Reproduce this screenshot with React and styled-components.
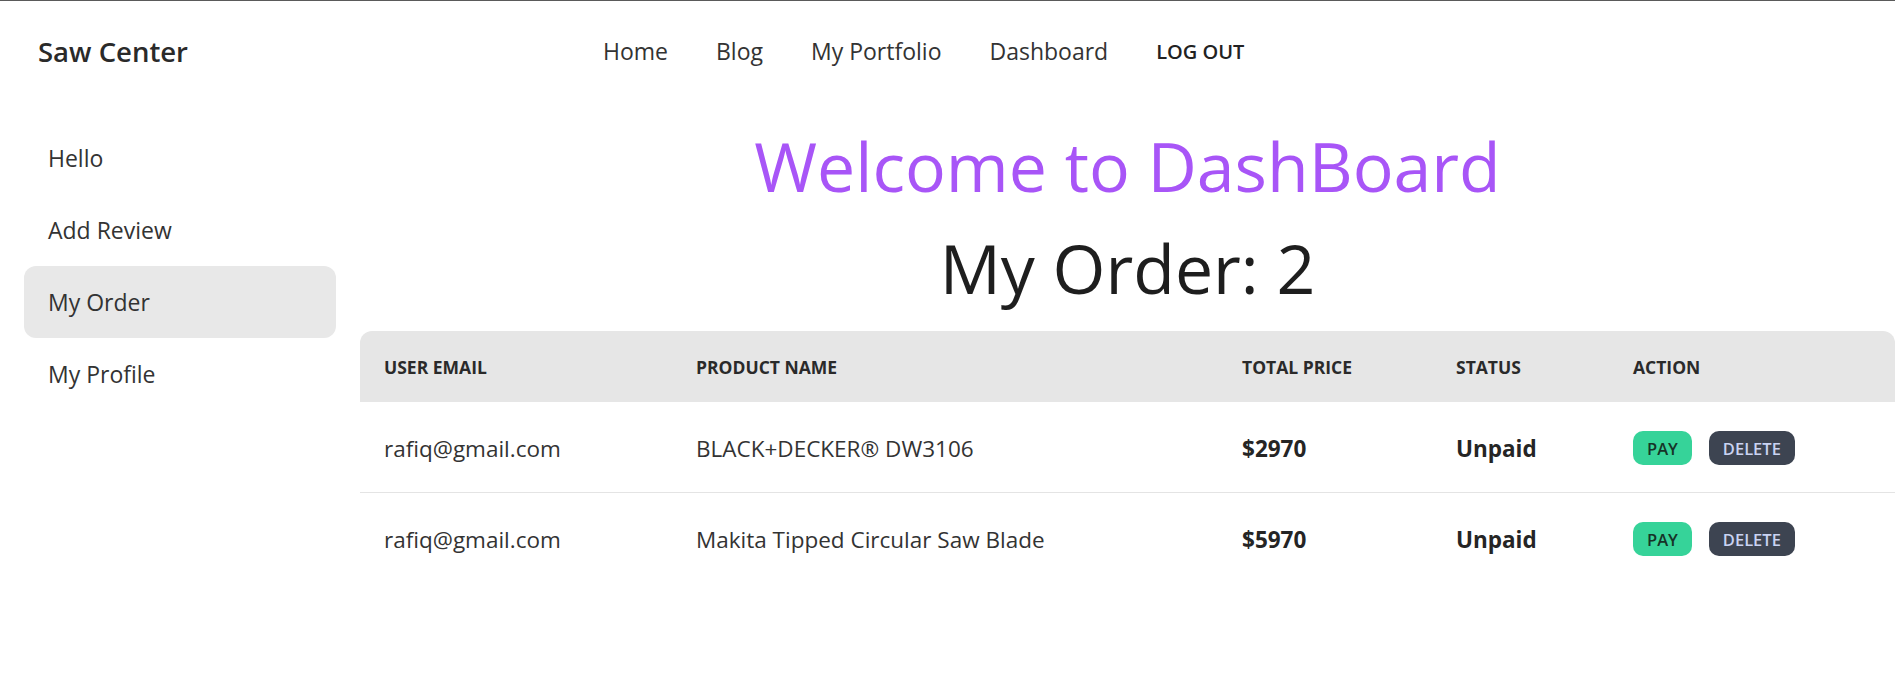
import React from "react";
import styled, { createGlobalStyle } from "styled-components";

const GlobalStyle = createGlobalStyle`
  body {
    margin: 0;
    background: #ffffff;
    font-family: "Open Sans", "Noto Sans", Arial, sans-serif;
    color: #2f2f2f;
  }
`;

const Page = styled.div`
  border-top: 1px solid #5a5a5a;
  min-height: 699px;
`;

const NavBar = styled.nav`
  display: flex;
  align-items: center;
  height: 100px;
  padding: 0 12px;
`;

const Brand = styled.div`
  width: 567px;
  padding-left: 26px;
  box-sizing: border-box;
  font-size: 27.5px;
  font-weight: 600;
  color: #2a2a2a;
`;

const Menu = styled.ul`
  display: flex;
  align-items: center;
  list-style: none;
  margin: 0;
  padding: 0;
`;

const MenuLink = styled.li`
  padding: 12px 24px;
  font-size: 23px;
  color: #333;
`;

const LogOut = styled.button`
  border: none;
  background: transparent;
  padding: 12px 24px;
  font-family: inherit;
  font-size: 20px;
  font-weight: 600;
  text-transform: uppercase;
  color: #222;
`;

const Layout = styled.div`
  display: grid;
  grid-template-columns: 360px 1fr;
`;

const Sidebar = styled.ul`
  list-style: none;
  margin: 0;
  padding: 21px 24px 0 24px;
`;

const SideItem = styled.li`
  height: 72px;
  display: flex;
  align-items: center;
  padding-left: 24px;
  border-radius: 12px;
  font-size: 23px;
  color: #333;
  background: ${(p) => (p.$active ? "#e8e8e8" : "transparent")};
`;

const Main = styled.main`
  padding-top: 31px;
  text-align: center;
`;

const Welcome = styled.h1`
  margin: 0;
  font-size: 68px;
  line-height: 68px;
  font-weight: 400;
  color: #a855f7;
`;

const OrderCount = styled.h2`
  margin: 34px 0 0;
  font-size: 68px;
  line-height: 68px;
  font-weight: 400;
  color: #1e1e1e;
`;

const Table = styled.table`
  margin-top: 29px;
  width: 100%;
  border-collapse: collapse;
  table-layout: fixed;
  text-align: left;
`;

const Th = styled.th`
  box-sizing: border-box;
  height: 71px;
  padding: 0 24px;
  background: #e6e6e6;
  font-size: 17.5px;
  font-weight: 700;
  text-transform: uppercase;
  color: #2a2a2a;
  width: ${(p) => p.$w || "auto"};

  &:first-child {
    border-top-left-radius: 12px;
  }
  &:last-child {
    border-top-right-radius: 12px;
  }
`;

const Tr = styled.tr`
  & + & td {
    border-top: 1px solid #e4e4e4;
  }
`;

const Td = styled.td`
  height: 88px;
  padding: 2px 24px 0;
  font-size: 22.5px;
  white-space: nowrap;
  font-weight: ${(p) => (p.$bold ? 700 : 400)};
  color: ${(p) => (p.$bold ? "#252525" : "#333")};
`;

const Actions = styled.div`
  display: flex;
  gap: 17px;
`;

const SmallButton = styled.button`
  height: 34px;
  padding: 0 14px;
  border: none;
  border-radius: 10px;
  font-family: inherit;
  font-size: 16.5px;
  font-weight: 600;
  background: ${(p) => (p.$variant === "pay" ? "#36d399" : "#3d4451")};
  color: ${(p) => (p.$variant === "pay" ? "#163328" : "#c9d3f2")};
`;

const orders = [
  { email: "rafiq@gmail.com", product: "BLACK+DECKER® DW3106", price: 2970, status: "Unpaid" },
  { email: "rafiq@gmail.com", product: "Makita Tipped Circular Saw Blade", price: 5970, status: "Unpaid" },
];

export default function App() {
  return (
    <Page>
      <GlobalStyle />
      <NavBar>
        <Brand>Saw Center</Brand>
        <Menu>
          <MenuLink>Home</MenuLink>
          <MenuLink>Blog</MenuLink>
          <MenuLink>My Portfolio</MenuLink>
          <MenuLink>Dashboard</MenuLink>
          <li>
            <LogOut>Log out</LogOut>
          </li>
        </Menu>
      </NavBar>

      <Layout>
        <Sidebar>
          <SideItem>Hello</SideItem>
          <SideItem>Add Review</SideItem>
          <SideItem $active>My Order</SideItem>
          <SideItem>My Profile</SideItem>
        </Sidebar>

        <Main>
          <Welcome>Welcome to DashBoard</Welcome>
          <OrderCount>My Order: {orders.length}</OrderCount>
          <Table>
            <thead>
              <tr>
                <Th $w="312px">User Email</Th>
                <Th $w="546px">Product Name</Th>
                <Th $w="214px">Total Price</Th>
                <Th $w="177px">Status</Th>
                <Th>Action</Th>
              </tr>
            </thead>
            <tbody>
              {orders.map((o, i) => (
                <Tr key={i}>
                  <Td>{o.email}</Td>
                  <Td>{o.product}</Td>
                  <Td $bold>${o.price}</Td>
                  <Td $bold>{o.status}</Td>
                  <Td>
                    <Actions>
                      <SmallButton $variant="pay">PAY</SmallButton>
                      <SmallButton>DELETE</SmallButton>
                    </Actions>
                  </Td>
                </Tr>
              ))}
            </tbody>
          </Table>
        </Main>
      </Layout>
    </Page>
  );
}
